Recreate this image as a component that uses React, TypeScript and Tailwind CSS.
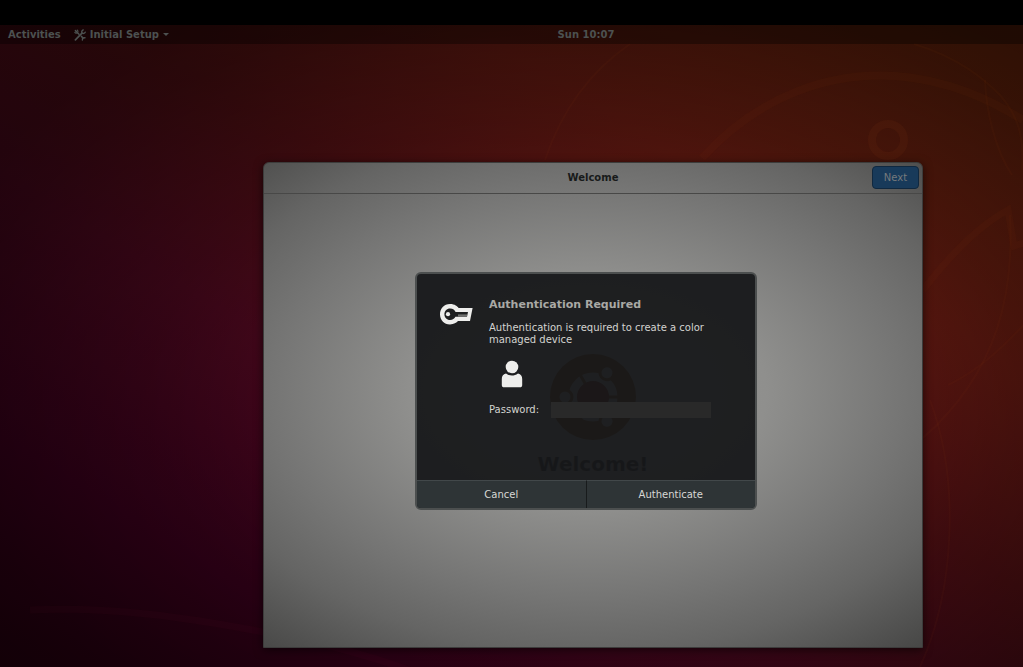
import { useState } from "react";
import clsx from "clsx";

function ToolsIcon() {
  return (
    <svg viewBox="0 0 12 12" className="w-3 h-3" fill="none" stroke="currentColor" strokeLinecap="round" aria-hidden="true">
      <path d="M1.4 1.6 L5 5.2" strokeWidth="1.5" />
      <path d="M.8 3.4 C1.4 4.4 2.8 4.4 3.6 3.6 C4.2 2.8 4 1.6 3.2 1" strokeWidth="1.1" />
      <path d="M7.4 7.4 L9 9" strokeWidth="1.6" />
      <path d="M8.4 11 L8.6 9 L11 8.8" strokeWidth="1.4" />
      <path d="M1.4 10.8 L8 4.2" strokeWidth="1.7" />
      <path d="M9.2 .9 C7.8 1.6 7.4 3 8 4 C9 4.8 10.6 4.4 11.2 3.2" strokeWidth="1.4" />
    </svg>
  );
}

function KeyIcon() {
  return (
    <svg viewBox="0 0 34 22" className="w-[34px] h-[22px]" aria-hidden="true">
      <path
        d="M11 1 C16 1 18.4 3.4 19.6 5 L33.6 5 L31 18 L19 18 C17.6 19.8 14.8 21.4 11 21.4 C5 21.4 1 16.8 1 11.2 C1 5.6 5 1 11 1 Z"
        fill="#eeeeec"
      />
      <path
        d="M11 5.4 C14 5.4 15.9 7 16.6 9 L29 9 L28 13.8 L16.4 13.8 C15.6 15.6 13.6 17 11 17 C7.8 17 5.4 14.4 5.4 11.2 C5.4 8 7.8 5.4 11 5.4 Z"
        fill="#1e1f20"
      />
      <rect x="19" y="11.4" width="9" height="2.4" fill="#70716f" />
      <circle cx="9" cy="11.2" r="2.1" fill="#eeeeec" />
    </svg>
  );
}

function UserIcon() {
  return (
    <svg viewBox="0 0 22 28" className="w-[22px] h-7" fill="#eeeeec" aria-hidden="true">
      <circle cx="11" cy="7" r="6.3" />
      <path d="M5 13.6 C7 15.2 9 15.6 11 15.6 C13 15.6 15 15.2 17 13.6 C20 14.2 21.2 16.4 21.2 19 L21.2 25 C21.2 26.6 20.4 27.3 19 27.3 L3 27.3 C1.6 27.3 .8 26.6 .8 25 L.8 19 C.8 16.4 2 14.2 5 13.6 Z" />
    </svg>
  );
}

function UbuntuLogo() {
  return (
    <svg viewBox="-43 -43 86 86" className="w-[86px] h-[86px]" aria-hidden="true">
      <circle r="43" fill="#6a3805" />
      <circle r="20" fill="none" stroke="#9a9a98" strokeWidth="9" />
      {/* gaps in the ring */}
      {[0, 120, 240].map(a => (
        <path key={a} d="M14 0 L26 0" stroke="#6a3805" strokeWidth="3" transform={`rotate(${a})`} />
      ))}
      {[60, 180, 300].map(a => (
        <circle key={a} cx="28" cy="0" r="7" fill="#9a9a98" stroke="#6a3805" strokeWidth="3" transform={`rotate(${a})`} />
      ))}
      <circle r="16" fill="#601808" />
    </svg>
  );
}

// Faint line art of the wallpaper
function WallpaperLines() {
  return (
    <svg viewBox="0 25 1172 732" preserveAspectRatio="xMinYMin slice" className="absolute inset-0 w-full h-full" fill="none" aria-hidden="true">
      <g stroke="#a04818" strokeOpacity=".06">
        <path d="M702 158 C760 95 830 72 895 76 C950 80 990 100 1023 120" strokeWidth="8" />
        <circle cx="888" cy="140" r="16" strokeWidth="8" strokeOpacity=".08" />
        <path d="M914 44 C960 58 985 80 1000 95 C1020 118 1024 140 1022 170" strokeWidth="2" />
        <path d="M985 80 C986 110 995 150 1012 175" strokeWidth="2" />
        <path d="M923 290 C950 255 980 225 1008 210 L1014 246 L1040 238" strokeWidth="7" />
        <path d="M1010 215 C1014 290 1000 370 923 438" strokeWidth="2" />
        <path d="M948 385 C980 370 1005 345 1030 318" strokeWidth="2" />
        <path d="M930 400 C960 480 955 590 920 667" strokeWidth="2" />
        <path d="M545 160 C560 115 585 75 630 44" strokeWidth="2" />
      </g>
      <path d="M30 610 C110 606 190 618 263 632 C340 645 420 670 480 700" stroke="#8a1040" strokeOpacity=".05" strokeWidth="7" />
    </svg>
  );
}

function SetupWindow() {
  return (
    <section
      aria-label="Welcome"
      className="absolute left-[263px] right-[249px] top-[137px] bottom-[109px] flex flex-col rounded-t-md border border-[#3c3c3b] bg-[radial-gradient(512px_333px_at_323px_229px,#9a9a98,#8f8f8d_35%,#757574_62%,#656564_78%,#484847)] shadow-[0_2px_10px_rgba(0,0,0,0.6)]"
    >
      <header className="grid grid-cols-[1fr_auto_1fr] items-center h-[31px] shrink-0 px-[3px] pb-0.5 border-b border-[#484847]">
        <h1 className="col-start-2 text-[10px] font-bold text-[#181a1a]">Welcome</h1>
        <button
          type="button"
          className="justify-self-end w-[47px] h-[23px] rounded-sm border border-[#10283f] bg-[#183a5a] text-[10px] text-[#75797c]"
        >
          Next
        </button>
      </header>
      <div className="flex-1 flex flex-col items-center justify-center gap-3 pb-3">
        <UbuntuLogo />
        <p className="text-xl leading-6 font-bold text-[#1c1e1e]">Welcome!</p>
      </div>
    </section>
  );
}

function AuthDialog() {
  const [password, setPassword] = useState("");
  const buttonClass = "h-7 flex-1 border-t border-[#42484a] bg-[#2e3436] text-[#d8d8d5]";

  return (
    <form
      role="dialog"
      aria-labelledby="auth-title"
      onSubmit={e => e.preventDefault()}
      className="w-[342px] overflow-hidden rounded-md border-2 border-[#4c4f4f] bg-[rgba(22,23,25,0.94)] text-[10px] leading-3 text-[#d3d3d0]"
    >
      <div className="flex gap-4 h-[206px] pl-[22px] pr-11 pt-6">
        <div className="pt-[5px] shrink-0">
          <KeyIcon />
        </div>
        <div className="flex-1">
          <h2 id="auth-title" className="text-[11px] leading-[14px] font-bold text-[#a9a9a5]">Authentication Required</h2>
          <p className="mt-2.5 whitespace-nowrap">
            Authentication is required to create a color
            <br />
            managed device
          </p>
          <div className="mt-3.5 ml-3">
            <UserIcon />
          </div>
          <div className="mt-3.5 flex items-center gap-3">
            <label htmlFor="password" className="w-[50px] shrink-0">Password:</label>
            <input
              id="password"
              type="password"
              value={password}
              onChange={e => setPassword(e.target.value)}
              className="w-40 h-4 px-1 bg-[#292929] outline-none"
            />
          </div>
        </div>
      </div>
      <div className="flex">
        <button type="button" className={clsx(buttonClass, "border-r border-r-[#181b1c]")}>Cancel</button>
        <button type="submit" className={buttonClass}>Authenticate</button>
      </div>
    </form>
  );
}

export default function App() {
  return (
    <div className="h-screen overflow-hidden bg-black pt-[25px] font-['DejaVu_Sans',sans-serif]">
      {/* The session is larger than the visible area and runs off its right and bottom edges */}
      <div className="relative flex flex-col w-[calc(100%+149px)] h-[calc(100%+90px)] bg-[radial-gradient(60%_60%_at_50%_50%,rgba(0,0,0,0),rgba(0,0,0,0.1)_40%,rgba(0,0,0,0.3)_62%,rgba(0,0,0,0.5)_90%,rgba(0,0,0,0.55)_100%),linear-gradient(to_top_right,#28000f_5%,#3a001c_22%,#4c081e_40%,#551014_55%,#651a11_70%,#6a240b_90%)]">
        <WallpaperLines />

        <nav className="relative z-10 grid grid-cols-[1fr_auto_1fr] items-center h-[19px] bg-black/35 px-2 text-[10px] font-bold text-[#4c5150]">
          <div className="flex items-center gap-[13px]">
            <button type="button">Activities</button>
            <button type="button" className="flex items-center gap-1">
              <ToolsIcon />
              Initial Setup
              <svg viewBox="0 0 6 3" className="w-[6px] h-[3px]" fill="currentColor" aria-hidden="true">
                <path d="M0 0 L6 0 L3 3 Z" />
              </svg>
            </button>
          </div>
          <time>Sun 10:07</time>
        </nav>

        <SetupWindow />

        <div className="absolute inset-0 flex items-center justify-center">
          <AuthDialog />
        </div>
      </div>
    </div>
  );
}
